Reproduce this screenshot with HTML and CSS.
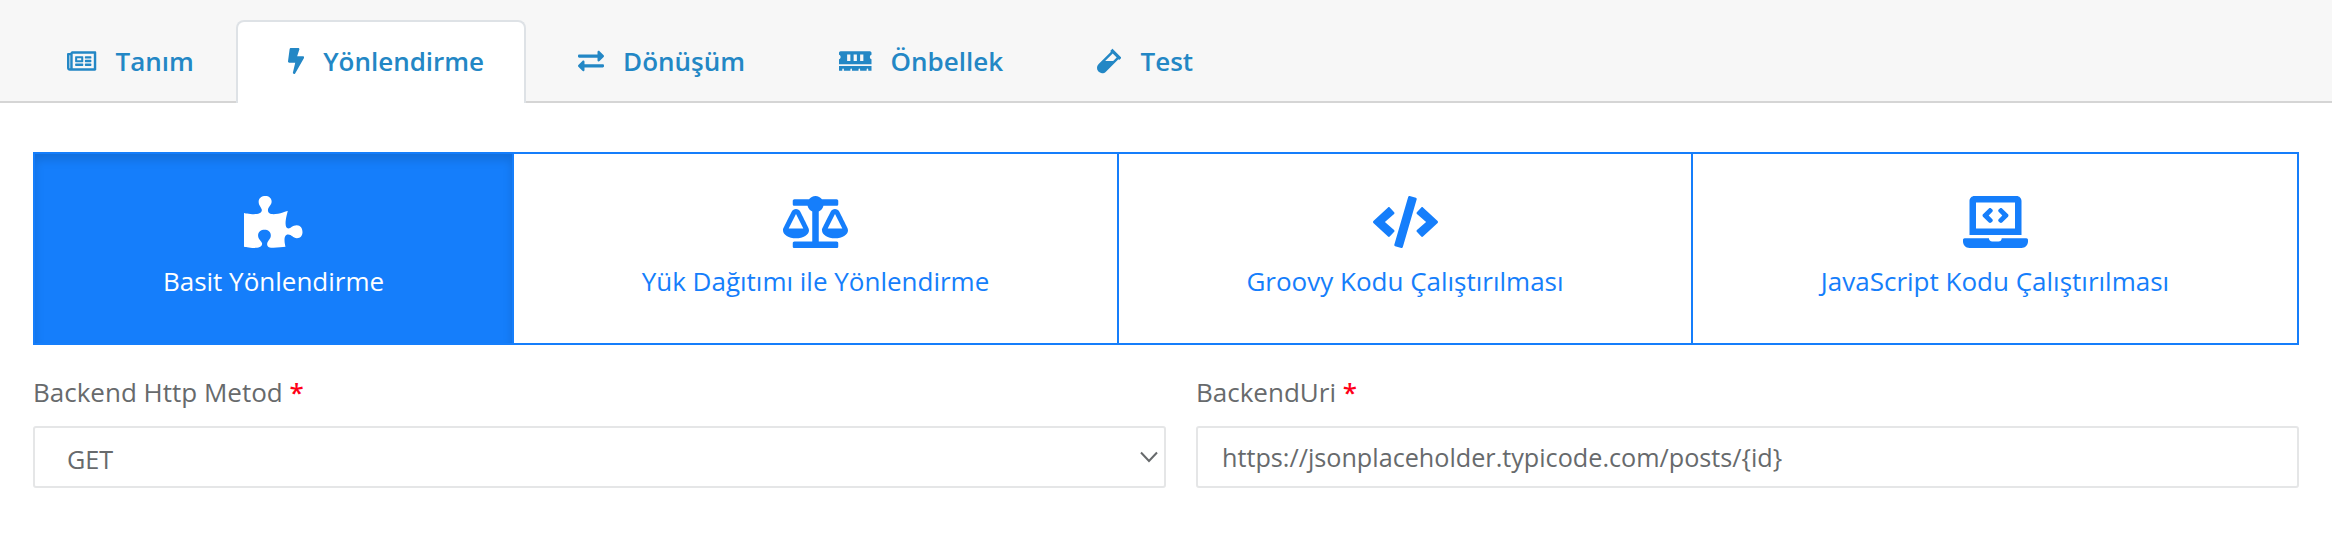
FILE: index.html
```html
<!DOCTYPE html>
<html lang="tr">
<head>
<meta charset="utf-8">
<title>Yönlendirme</title>
<link rel="stylesheet" href="styles.css">
</head>
<body>
<nav class="tabs">
  <a class="tab"><svg class="tab-icon" width="29.25" height="26" viewBox="0 0 576 512"><path d="M552 64H112c-20.858 0-38.643 13.377-45.248 32H24c-13.255 0-24 10.745-24 24v272c0 30.928 25.072 56 56 56h496c13.255 0 24-10.745 24-24V88c0-13.255-10.745-24-24-24zM48 392V144h16v248c0 4.411-3.589 8-8 8s-8-3.589-8-8zm480 8H111.422c.374-2.614.578-5.283.578-8V112h416v288zM172 280h136c6.627 0 12-5.373 12-12v-96c0-6.627-5.373-12-12-12H172c-6.627 0-12 5.373-12 12v96c0 6.627 5.373 12 12 12zm28-80h80v40h-80v-40zm-40 140v-24c0-6.627 5.373-12 12-12h136c6.627 0 12 5.373 12 12v24c0 6.627-5.373 12-12 12H172c-6.627 0-12-5.373-12-12zm192 0v-24c0-6.627 5.373-12 12-12h104c6.627 0 12 5.373 12 12v24c0 6.627-5.373 12-12 12H364c-6.627 0-12-5.373-12-12zm0-144v-24c0-6.627 5.373-12 12-12h104c6.627 0 12 5.373 12 12v24c0 6.627-5.373 12-12 12H364c-6.627 0-12-5.373-12-12zm0 72v-24c0-6.627 5.373-12 12-12h104c6.627 0 12 5.373 12 12v24c0 6.627-5.373 12-12 12H364c-6.627 0-12-5.373-12-12z"/></svg>Tanım</a>
  <a class="tab tab-active"><svg class="tab-icon" width="16.25" height="26" viewBox="0 0 320 512"><path d="M296 160H180.6l42.6-129.8C227.2 15 215.7 0 200 0H56C44 0 33.8 8.9 32.2 20.8l-32 240C-1.7 275.2 9.5 288 24 288h118.7L96.6 482.5c-3.6 15.2 8 29.5 23.3 29.5 8.4 0 16.4-4.4 20.8-12l176-304c9.3-15.9-2.2-36-20.7-36z"/></svg>Yönlendirme</a>
  <a class="tab"><svg class="tab-icon" width="26" height="26" viewBox="0 0 512 512"><path d="M0 168v-16c0-13.255 10.745-24 24-24h360V80c0-21.367 25.899-32.042 40.971-16.971l80 80c9.372 9.373 9.372 24.569 0 33.941l-80 80C409.956 271.982 384 261.456 384 240v-48H24c-13.255 0-24-10.745-24-24zm488 152H128v-48c0-21.314-25.862-32.08-40.971-16.971l-80 80c-9.372 9.373-9.372 24.569 0 33.941l80 80C102.057 463.997 128 453.437 128 432v-48h360c13.255 0 24-10.745 24-24v-16c0-13.255-10.745-24-24-24z"/></svg>Dönüşüm</a>
  <a class="tab"><svg class="tab-icon" width="32.5" height="26" viewBox="0 0 640 512"><path d="M640 130.940V96c0-17.670-14.330-32-32-32H32c-17.670 0-32 14.330-32 32v34.940c18.600 6.610 32 24.190 32 45.060s-13.400 38.450-32 45.060V320h640v-98.940c-18.600-6.610-32-24.190-32-45.060s13.400-38.450 32-45.060zM224 256h-64V128h64v128zm128 0h-64V128h64v128zm128 0h-64V128h64v128zM0 448h64v-26.670c0-8.840 7.160-16 16-16s16 7.160 16 16V448h128v-26.670c0-8.840 7.160-16 16-16s16 7.160 16 16V448h128v-26.670c0-8.840 7.160-16 16-16s16 7.160 16 16V448h128v-26.670c0-8.840 7.160-16 16-16s16 7.160 16 16V448h64v-96H0v96z"/></svg>Önbellek</a>
  <a class="tab"><svg class="tab-icon" width="24.4" height="26" viewBox="0 0 480 512"><path d="M477.7 186.100L309.500 18.300c-3.100-3.100-8.200-3.100-11.300 0l-34 33.900c-3.100 3.100-3.100 8.200 0 11.300l11.200 11.100L33 316.500c-38.800 38.700-45.100 102-9.400 143.500 20.600 24 49.500 36 78.400 35.900 26.400 0 52.800-10 72.800-30.100l246.300-245.700 11.200 11.100c3.100 3.100 8.200 3.100 11.300 0l34-33.900c3.100-3 3.100-8.100.1-11.200zM318 256H161l148-147.700 78.500 78.300L318 256z"/></svg>Test</a>
</nav>
<main class="content">
  <div class="modes">
    <button class="mode mode-simple"><svg class="mode-icon" width="58.5" height="52" viewBox="0 0 576 512"><path d="M519.442 288.651c-41.519 0-59.5 31.593-82.058 31.593C377.409 320.244 432 144 432 144s-196.288 80-196.288-3.297c0-35.827 36.288-46.25 36.288-85.985C272 19.216 243.885 0 210.539 0c-34.654 0-66.366 18.891-66.366 56.346 0 41.364 31.711 59.277 31.711 81.75C175.885 207.719 0 166.758 0 166.758v333.237s178.635 41.047 178.635-28.662c0-22.473-40-40.107-40-81.471 0-37.456 29.25-56.346 63.577-56.346 33.673 0 61.788 19.216 61.788 54.717 0 39.735-36.288 50.158-36.288 85.985 0 60.803 129.675 25.73 181.23 25.73 0 0-34.725-120.101 25.827-120.101 35.962 0 46.423 36.152 86.308 36.152C556.712 416 576 387.99 576 354.443c0-34.199-18.962-65.792-56.558-65.792z"/></svg><span>Basit Yönlendirme</span></button>
    <button class="mode mode-balanced"><svg class="mode-icon" width="65" height="52" viewBox="0 0 640 512"><path d="M256 336h-.02c0-16.18 1.34-8.73-85.05-181.51-17.65-35.29-68.19-35.36-85.87 0C-2.06 328.75.02 320.33.02 336H0c0 44.18 57.31 80 128 80s128-35.82 128-80zM128 176l72 144H56l72-144zm511.98 160c0-16.18 1.34-8.73-85.05-181.51-17.65-35.29-68.19-35.36-85.87 0-87.12 174.26-85.04 165.84-85.04 181.51H384c0 44.18 57.31 80 128 80s128-35.82 128-80h-.02zM440 320l72-144 72 144H440zm88 128H352V153.25c23.51-10.29 41.16-31.48 46.39-57.25H528c8.84 0 16-7.16 16-16V48c0-8.84-7.16-16-16-16H383.64C369.04 12.68 346.09 0 320 0s-49.04 12.68-63.64 32H112c-8.84 0-16 7.16-16 16v32c0 8.84 7.16 16 16 16h129.61c5.23 25.76 22.87 46.96 46.39 57.25V448H112c-8.84 0-16 7.16-16 16v32c0 8.84 7.16 16 16 16h416c8.84 0 16-7.16 16-16v-32c0-8.84-7.16-16-16-16z"/></svg><span>Yük Dağıtımı ile Yönlendirme</span></button>
    <button class="mode mode-groovy"><svg class="mode-icon" width="65" height="52" viewBox="0 0 640 512"><path d="M278.9 511.5l-61-17.7c-6.4-1.8-10-8.5-8.2-14.9L346.2 8.7c1.8-6.4 8.5-10 14.9-8.2l61 17.7c6.4 1.8 10 8.5 8.2 14.9L293.8 503.3c-1.9 6.4-8.5 10.1-14.9 8.2zm-114-112.2l43.5-46.4c4.6-4.9 4.3-12.7-.8-17.2L117 256l90.6-79.7c5.1-4.5 5.500-12.3.8-17.200l-43.500-46.400c-4.500-4.800-12.100-5.100-17-.5L3.800 247.200c-5.100 4.700-5.100 12.800 0 17.500l144.100 135.100c4.900 4.600 12.500 4.400 17-.5zm327.200.6l144.100-135.100c5.100-4.700 5.100-12.800 0-17.500L492.100 112.100c-4.800-4.500-12.400-4.300-17 .5L431.600 159c-4.600 4.900-4.300 12.700.8 17.200L523 256l-90.600 79.700c-5.100 4.500-5.500 12.300-.8 17.200l43.500 46.400c4.500 4.900 12.100 5.100 17 .6z"/></svg><span>Groovy Kodu Çalıştırılması</span></button>
    <button class="mode mode-script"><svg class="mode-icon" width="65" height="52" viewBox="0 0 640 512"><path d="M255.03 261.65c6.25 6.25 16.38 6.25 22.63 0l11.31-11.31c6.25-6.25 6.25-16.38 0-22.63L253.25 192l35.71-35.72c6.25-6.25 6.25-16.38 0-22.63l-11.31-11.31c-6.25-6.25-16.38-6.25-22.63 0l-58.34 58.34c-6.25 6.25-6.25 16.38 0 22.63l58.35 58.34zm96.01-11.3l11.31 11.31c6.25 6.25 16.38 6.25 22.63 0l58.34-58.34c6.25-6.25 6.25-16.38 0-22.63l-58.34-58.34c-6.25-6.25-16.38-6.25-22.63 0l-11.31 11.31c-6.25 6.25-6.25 16.38 0 22.63L386.75 192l-35.71 35.72c-6.25 6.25-6.25 16.38 0 22.63zM624 416H381.54c-.74 19.81-14.71 32-32.74 32H288c-18.69 0-33.02-17.47-32.77-32H16c-8.8 0-16 7.2-16 16v16c0 35.2 28.8 64 64 64h512c35.2 0 64-28.8 64-64v-16c0-8.8-7.2-16-16-16zM576 48c0-26.4-21.6-48-48-48H112C85.6 0 64 21.6 64 48v336h512V48zm-64 272H128V64h384v256z"/></svg><span>JavaScript Kodu Çalıştırılması</span></button>
  </div>
  <div class="form">
    <div class="field">
      <div class="label">Backend Http Metod <span class="required">*</span></div>
      <div class="control select"><span>GET</span><svg class="chevron" width="20" height="12" viewBox="0 0 20 12"><path d="M2 1.500L10 10L18 1.500"/></svg></div>
    </div>
    <div class="field">
      <div class="label">BackendUri <span class="required">*</span></div>
      <div class="control input">https://jsonplaceholder.typicode.com/posts/{id}</div>
    </div>
  </div>
</main>
</body>
</html>
```
FILE: styles.css
```css
* {
  box-sizing: border-box;
}

body {
  margin: 0;
  background: #fff;
  color: #676a6c;
  font: 26px/36px "Open Sans", sans-serif;
}

.tabs {
  display: flex;
  height: 103px;
  padding: 20px 0 0 15.3px;
  background: #f7f7f7;
  border-bottom: 2px solid #d5d5d5;
}

.tab {
  display: flex;
  align-items: center;
  height: 83px;
  padding: 0 40px 4px 50px;
  border: 2px solid transparent;
  border-bottom: 0;
  border-radius: 8px 8px 0 0;
  color: #2387c5;
  font-weight: 600;
  white-space: nowrap;
}

.tab-active {
  background: #fff;
  border-color: #dee2e6;
}

.tab-icon {
  flex: none;
  margin: 1px 19px 0 0;
  fill: currentColor;
}

.content {
  padding: 49px 33px 0;
}

.modes {
  display: grid;
  grid-template-columns: 479px 605px 574px 608px;
  height: 193px;
}

.mode {
  display: flex;
  flex-direction: column;
  align-items: center;
  margin: 0 -2px 0 0;
  padding: 41.5px 0 0;
  border: 2px solid #157efb;
  background: #fff;
  color: #157efb;
  font: inherit;
}

.mode-simple {
  z-index: 1;
  background: #157efb;
  color: #fff;
  box-shadow: inset 0 6px 10px rgba(0, 0, 0, 0.125);
}

.mode-script {
  margin-right: 0;
}

.mode-icon {
  margin-bottom: 15.5px;
  fill: currentColor;
}

.form {
  display: grid;
  grid-template-columns: 1133px 1103px;
  gap: 30px;
  padding-top: 29px;
}

.required {
  color: #ff0018;
  font-weight: 600;
}

.control {
  display: flex;
  align-items: center;
  height: 62px;
  margin-top: 16px;
  border: 2px solid #e5e6e7;
  border-radius: 3px;
  font-size: 25.2px;
}

.select {
  justify-content: space-between;
  padding: 4px 5px 0 32px;
}

.input {
  padding: 0 24px;
}

.chevron {
  margin-bottom: 4px;
  fill: none;
  stroke: #676a6c;
  stroke-width: 2;
}
```
